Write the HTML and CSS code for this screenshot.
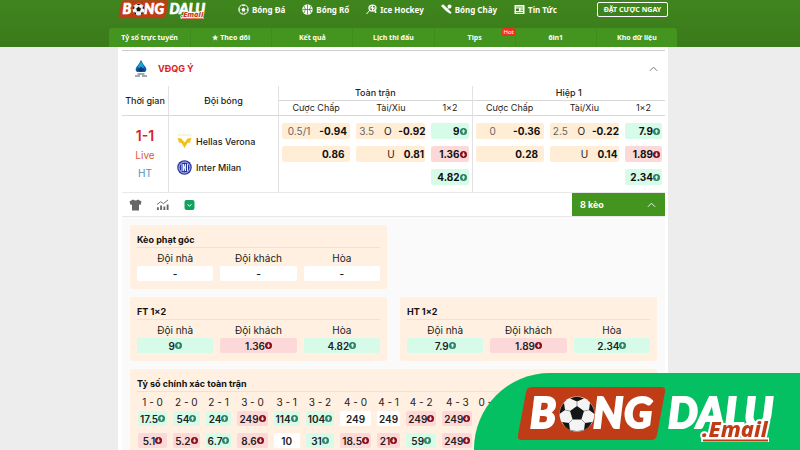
FILE: index.html
```html
<!DOCTYPE html>
<html lang="vi">
<head>
  <meta charset="UTF-8" />
  <meta name="viewport" content="width=device-width, initial-scale=1.0"/>
  <title>Bong Dalu</title>
  <link rel="stylesheet" href="styles.css">
</head>
<body>
  <!-- shared icons -->
  <svg class="sprite" aria-hidden="true">
    <symbol id="logo" viewBox="0 0 262 56">
      <path d="M14 1H143Q148 1 147 6L139 49Q138 54 133 54H4Q-1 54 0 49L8 6Q9 1 14 1Z" fill="#c03c16"/>
      <g class="logo-text">
        <text x="12" y="42">B</text>
        <text x="75" y="42">N</text>
        <text x="106" y="42">G</text>
        <text x="150" y="42">DALU</text>
      </g>
      <circle cx="59" cy="28" r="17.5" fill="#f4f4f4"/>
      <g fill="#151515">
        <path d="M59 20l7 5-2.600 8.400h-8.800L52 25z"/>
        <path d="M52 12.500q7-3.500 14 0L59 15.500z"/>
        <path d="M72 17q4 4 4.500 11L71 24z"/>
        <path d="M46 17q-4 4-4.500 11L47 24z"/>
        <path d="M74 36q-3 6-8 8l1-7z"/>
        <path d="M44 36q3 6 8 8l-1-7z"/>
      </g>
      <g fill="none" stroke="#999" stroke-width="1">
        <path d="M59 20v-5M66 25l5-1M63.400 33.400L67 37M54.600 33.400L51 37M52 25l-5-1M52 44q7 3 14 0"/>
      </g>
      <path d="M183 54H251" stroke="#fff" stroke-width="5"/>
      <text class="logo-mail" x="184" y="51">.Email</text>
      <path d="M185 54.500H250" stroke="#c03c16" stroke-width="2"/>
    </symbol>
    <symbol id="up" viewBox="0 0 14 14">
      <circle cx="7" cy="7" r="7" fill="#2b8063"/>
      <path d="M7 2.500l4 4.500H8.500v4h-3V7H3z" fill="#d5fbe8"/>
    </symbol>
    <symbol id="down" viewBox="0 0 14 14">
      <circle cx="7" cy="7" r="7" fill="#850b16"/>
      <path d="M7 11.500l4-4.500H8.500V3h-3v4H3z" fill="#ffd9d9"/>
    </symbol>
    <symbol id="chevron" viewBox="0 0 10 6">
      <path d="M1 5l4-4 4 4" fill="none" stroke="currentColor" stroke-width="1"/>
    </symbol>
  </svg>

  <header class="header">
    <div class="topbar">
      <a href="#" class="logo" aria-label="Bong Dalu Email"><svg><use href="#logo"/></svg></a>
      <nav class="sports">
        <a href="#">
          <svg viewBox="0 0 22 22"><circle cx="11" cy="11" r="9.500" fill="none" stroke="#fff" stroke-width="2"/><path d="M11 7l4 3-1.500 5h-5L7 10zM7 2l4 2.500L15 2zM2 8l3 3-2 4zM20 8l-3 3 2 4zM6 18l3-1v3zM16 18l-3-1v3z" fill="#fff"/></svg>
          Bóng Đá
        </a>
        <a href="#">
          <svg viewBox="0 0 22 22"><circle cx="11" cy="11" r="10.500" fill="#fff"/><path d="M11 1v20M1 11h20M4 4q6 7 0 14M18 4q-6 7 0 14" fill="none" stroke="#3b801b" stroke-width="1.500"/></svg>
          Bóng Rổ
        </a>
        <a href="#">
          <svg viewBox="0 0 22 22"><ellipse cx="13" cy="8" rx="7" ry="6" fill="none" stroke="#fff" stroke-width="2.500"/><path d="M8 12l-7 8M9 5l8 6M13 2v12M8 8h11" stroke="#fff" stroke-width="2"/><circle cx="19" cy="16" r="2" fill="#fff"/></svg>
          Ice Hockey
        </a>
        <a href="#">
          <svg viewBox="0 0 22 22"><path d="M1 2l4-1 7 7 9 9-2 3-9-6-9-9z" fill="#fff"/><circle cx="17" cy="5" r="4" fill="#fff"/><path d="M11 12l4-4" stroke="#fff" stroke-width="2"/></svg>
          Bóng Chày
        </a>
        <a href="#">
          <svg viewBox="0 0 22 22"><path d="M1 2h20v18H1z" fill="#fff"/><path d="M4 6h14M13 10h5M13 13h5M4 17h14" stroke="#3b801b" stroke-width="1.500"/><path d="M4 9h6v5H4z" fill="#3b801b"/></svg>
          Tin Tức
        </a>
      </nav>
      <button class="bet-btn">ĐẶT CƯỢC NGAY</button>
    </div>
    <nav class="subnav">
      <a href="#">Tỷ số trực tuyến</a>
      <a href="#">★ Theo dõi</a>
      <a href="#">Kết quả</a>
      <a href="#">Lịch thi đấu</a>
      <a href="#">Tips<span class="hot">Hot</span></a>
      <a href="#">6in1</a>
      <a href="#">Kho dữ liệu</a>
    </nav>
  </header>

  <main class="page">
    <div class="league">
      <svg class="league-logo" viewBox="0 0 28 34"><path d="M14 0Q17 7 23 14Q27 20 22 24H6Q1 20 5 14Q11 7 14 0Z" fill="#0b5fa5"/><path d="M14 3L20 14L14 23L8 14Z" fill="#19a5dc"/><path d="M6 20L14 13L22 20L14 24Z" fill="#093a78"/><path d="M7 28h14M2 32h10M16 32h10" stroke="#456" stroke-width="2"/></svg>
      <h2>VĐQG Ý</h2>
      <button class="collapse" aria-label="Thu gọn"><svg><use href="#chevron"/></svg></button>
    </div>

    <table class="match">
      <colgroup>
        <col class="c-time"><col class="c-team">
        <col class="c-odd"><col class="c-odd"><col class="c-win">
        <col class="c-odd"><col class="c-odd"><col class="c-win">
      </colgroup>
      <thead>
        <tr>
          <th rowspan="2">Thời gian</th>
          <th rowspan="2" class="line">Đội bóng</th>
          <th colspan="3" class="line group">Toàn trận</th>
          <th colspan="3" class="line group">Hiệp 1</th>
        </tr>
        <tr class="types">
          <th class="line">Cược Chấp</th><th>Tài/Xiu</th><th>1×2</th>
          <th class="line">Cược Chấp</th><th>Tài/Xiu</th><th>1×2</th>
        </tr>
      </thead>
      <tbody>
        <tr>
          <td rowspan="3" class="time">
            <strong>1-1</strong>
            <span class="live">Live</span>
            <span class="half">HT</span>
          </td>
          <td rowspan="3" class="teams line">
            <div class="team">
              <svg viewBox="0 0 30 30"><path d="M1 2h28" stroke="#e8e4a0" stroke-width="1.500"/><path d="M1 8l8 1 6 8 6-8 8-1-3 9-5 1-6 10-6-10-5-1z" fill="#f2c21c"/><path d="M11 9l4 6 4-6" fill="none" stroke="#fff" stroke-width="1"/></svg>
              Hellas Verona
            </div>
            <div class="team">
              <svg viewBox="0 0 30 30"><circle cx="15" cy="15" r="14.500" fill="#2336a0"/><circle cx="15" cy="15" r="11" fill="none" stroke="#fff" stroke-width="1.500"/><path d="M10 8v14M13 22V8l4 14V8M21 8v14" fill="none" stroke="#fff" stroke-width="1.800"/></svg>
              Inter Milan
            </div>
          </td>
          <td class="line"><div class="odd"><span>0.5/1</span><b>-0.94</b></div></td>
          <td><div class="odd"><span>3.5</span><i>O</i><b>-0.92</b></div></td>
          <td><div class="odd win up"><b>9</b><svg><use href="#up"/></svg></div></td>
          <td class="line"><div class="odd"><span>0</span><b>-0.36</b></div></td>
          <td><div class="odd"><span>2.5</span><i>O</i><b>-0.22</b></div></td>
          <td><div class="odd win up"><b>7.9</b><svg><use href="#up"/></svg></div></td>
        </tr>
        <tr>
          <td class="line"><div class="odd"><span></span><b>0.86</b></div></td>
          <td><div class="odd"><span></span><i>U</i><b>0.81</b></div></td>
          <td><div class="odd win down"><b>1.36</b><svg><use href="#down"/></svg></div></td>
          <td class="line"><div class="odd"><span></span><b>0.28</b></div></td>
          <td><div class="odd"><span></span><i>U</i><b>0.14</b></div></td>
          <td><div class="odd win down"><b>1.89</b><svg><use href="#down"/></svg></div></td>
        </tr>
        <tr class="last">
          <td class="line"></td>
          <td></td>
          <td><div class="odd win up"><b>4.82</b><svg><use href="#up"/></svg></div></td>
          <td class="line"></td>
          <td></td>
          <td><div class="odd win up"><b>2.34</b><svg><use href="#up"/></svg></div></td>
        </tr>
      </tbody>
    </table>

    <div class="tools">
      <button aria-label="Đội hình"><svg viewBox="0 0 24 24"><path d="M7 1q5 4 10 0l7 4-2 7-3-1v12H5V11l-3 1-2-7z" fill="#666"/></svg></button>
      <button aria-label="Thống kê"><svg viewBox="0 0 28 24"><path d="M4 23v-6M11 23V13M18 23v-8M25 23V11" stroke="#666" stroke-width="4"/><path d="M2 11l8-6 6 4 10-8" fill="none" stroke="#666" stroke-width="2"/></svg></button>
      <button aria-label="Sân đấu"><svg viewBox="0 0 24 24"><rect x="2" y="2" width="20" height="20" rx="4" fill="#12a15e"/><path d="M8 11l4 3 4-3" fill="none" stroke="#fff" stroke-width="2"/></svg></button>
      <button class="more">8 kèo <svg><use href="#chevron"/></svg></button>
    </div>

    <div class="markets">
      <section class="card">
        <h3>Kèo phạt góc</h3>
        <div class="choices">
          <div>Đội nhà<div class="price">-</div></div>
          <div>Đội khách<div class="price">-</div></div>
          <div>Hòa<div class="price">-</div></div>
        </div>
      </section>
      <section class="card start">
        <h3>FT 1×2</h3>
        <div class="choices">
          <div>Đội nhà<div class="price up">9<svg><use href="#up"/></svg></div></div>
          <div>Đội khách<div class="price down">1.36<svg><use href="#down"/></svg></div></div>
          <div>Hòa<div class="price up">4.82<svg><use href="#up"/></svg></div></div>
        </div>
      </section>
      <section class="card">
        <h3>HT 1×2</h3>
        <div class="choices">
          <div>Đội nhà<div class="price up">7.9<svg><use href="#up"/></svg></div></div>
          <div>Đội khách<div class="price down">1.89<svg><use href="#down"/></svg></div></div>
          <div>Hòa<div class="price up">2.34<svg><use href="#up"/></svg></div></div>
        </div>
      </section>
      <section class="card wide">
        <h3>Tỷ số chính xác toàn trận</h3>
        <table class="scores">
          <thead>
            <tr><th>1 - 0</th><th>2 - 0</th><th>2 - 1</th><th>3 - 0</th><th>3 - 1</th><th>3 - 2</th><th>4 - 0</th><th>4 - 1</th><th>4 - 2</th><th>4 - 3</th><th>0 - 0</th></tr>
          </thead>
          <tbody>
            <tr>
              <td><div class="price up">17.5<svg><use href="#up"/></svg></div></td>
              <td><div class="price up">54<svg><use href="#up"/></svg></div></td>
              <td><div class="price up">24<svg><use href="#up"/></svg></div></td>
              <td><div class="price down">249<svg><use href="#down"/></svg></div></td>
              <td><div class="price up">114<svg><use href="#up"/></svg></div></td>
              <td><div class="price up">104<svg><use href="#up"/></svg></div></td>
              <td><div class="price">249</div></td>
              <td><div class="price">249</div></td>
              <td><div class="price down">249<svg><use href="#down"/></svg></div></td>
              <td><div class="price down">249<svg><use href="#down"/></svg></div></td>
              <td></td>
            </tr>
            <tr>
              <td><div class="price down">5.1<svg><use href="#down"/></svg></div></td>
              <td><div class="price down">5.2<svg><use href="#down"/></svg></div></td>
              <td><div class="price up">6.7<svg><use href="#up"/></svg></div></td>
              <td><div class="price down">8.6<svg><use href="#down"/></svg></div></td>
              <td><div class="price">10</div></td>
              <td><div class="price up">31<svg><use href="#up"/></svg></div></td>
              <td><div class="price down">18.5<svg><use href="#down"/></svg></div></td>
              <td><div class="price down">21<svg><use href="#down"/></svg></div></td>
              <td><div class="price up">59<svg><use href="#up"/></svg></div></td>
              <td><div class="price down">249<svg><use href="#down"/></svg></div></td>
              <td></td>
            </tr>
          </tbody>
        </table>
      </section>
    </div>
  </main>

  <a href="#" class="banner" aria-label="Bong Dalu Email"><svg><use href="#logo"/></svg></a>
</body>
</html>
```
FILE: styles.css
```css
* {
  box-sizing: border-box;
}

body {
  margin: 0;
  padding-right: 14px;
  min-height: 100vh;
  background: #ededed;
  font-family: Inter, "Liberation Sans", sans-serif;
  font-size: 10px;
  color: #222;
}

a {
  color: inherit;
  text-decoration: none;
}

button {
  padding: 0;
  border: none;
  background: none;
  color: inherit;
  font: inherit;
  cursor: pointer;
}

h2, h3 {
  margin: 0;
}

svg {
  display: block;
  flex: none;
}

.sprite {
  position: absolute;
  width: 0;
  height: 0;
}

.logo-text {
  font: italic 900 42px Lato, sans-serif;
  fill: #fff;
  stroke: #fff;
  stroke-width: 2px;
}

.logo-mail {
  font: italic 800 22px "Noto Sans", sans-serif;
  fill: #c03c16;
  stroke: #fff;
  stroke-width: 4px;
  stroke-linejoin: round;
  paint-order: stroke;
}

/* header */
.header {
  margin-right: -14px;
  padding-right: 14px;
  background: linear-gradient(#3f851d, #3a7a1b);
  color: #fff;
  font-family: "Noto Sans", sans-serif;
  font-weight: 700;
}

.topbar {
  display: flex;
  align-items: center;
  max-width: 550px;
  height: 19px;
  margin: 0 auto;
}

.logo svg {
  width: 90px;
  height: 19px;
}

.sports {
  display: flex;
  gap: 17px;
  margin-left: 30px;
  font-size: 8px;
}

.sports a {
  display: flex;
  align-items: center;
  gap: 3px;
  white-space: nowrap;
}

.sports svg {
  width: 11px;
  height: 11px;
}

.bet-btn {
  width: 71px;
  height: 15px;
  margin-left: auto;
  border: 1px solid #fff;
  border-radius: 2px;
  font-size: 7px;
  line-height: 12px;
  white-space: nowrap;
}

.subnav {
  display: grid;
  grid-template-columns: repeat(7, 1fr);
  max-width: 568px;
  margin: 9px auto 0;
  border-radius: 3px 3px 0 0;
  background: #43951f;
  font-size: 7px;
  line-height: 19px;
  text-align: center;
}

.subnav a {
  position: relative;
}

.subnav a + a {
  border-left: 1px solid #3d8c1c;
}

.hot {
  position: absolute;
  top: 0;
  right: 0;
  padding: 0 1px;
  border-radius: 2px;
  background: #f0301f;
  font-size: 6px;
  font-weight: 400;
  line-height: 8px;
}

/* match */
.page {
  max-width: 550px;
  margin: 0 auto;
  padding: 3px 3px 0 4px;
  background: #fff;
}

.league {
  display: flex;
  align-items: center;
  height: 36px;
  padding: 0 7px 0 12px;
  border-top: 1px solid #ccc;
}

.league-logo {
  width: 14px;
  height: 17px;
}

.league h2 {
  margin-left: 10px;
  color: #d8232a;
  font-size: 9px;
  font-weight: 700;
}

.collapse {
  margin-left: auto;
  color: #666;
}

.collapse svg, .more svg {
  width: 9px;
  height: 6px;
}

.match {
  width: 100%;
  border-collapse: separate;
  border-spacing: 0;
  table-layout: fixed;
  border-bottom: 1px solid #e8e8e8;
}

.c-time { width: 46px; }
.c-team { width: 110px; }
.c-win { width: 43px; }

.match th {
  height: 15px;
  padding: 0;
  border-bottom: 1px solid #d8d8d8;
  font-size: 9px;
  font-weight: 500;
  line-height: 14px;
  white-space: nowrap;
}

.match .types th {
  font-weight: 400;
}

.match .line {
  border-left: 1px solid #e2e2e2;
}

.match td {
  padding: 7px 3px 0;
}

.match .last td {
  padding-bottom: 7px;
}

.match .time {
  padding: 0;
  text-align: center;
}

.time strong {
  display: block;
  color: #d8232a;
  font-size: 14px;
  font-weight: 600;
  line-height: 20px;
}

.time span {
  display: block;
  font-size: 10px;
  line-height: 18px;
}

.time .live {
  color: #dd5a34;
}

.time .half {
  color: #4a92c6;
}

.match .teams {
  padding: 0 8px;
}

.team {
  display: flex;
  align-items: center;
  gap: 4px;
  height: 26px;
  font-size: 9px;
  font-weight: 500;
}

.team svg {
  width: 15px;
  height: 15px;
}

.odd {
  display: grid;
  grid-auto-flow: column;
  grid-auto-columns: 1fr;
  align-items: center;
  height: 16px;
  border-radius: 2px;
  background: #ffedd6;
  text-align: center;
  white-space: nowrap;
}

.odd span {
  color: #666;
}

.odd i {
  font-style: normal;
}

.odd b {
  color: #111;
  font-weight: 700;
}

.odd.win {
  display: flex;
  justify-content: flex-end;
  padding-right: 2px;
}

.odd svg, .price svg {
  width: 7px;
  height: 7px;
}

.odd.up, .price.up {
  background: #d6fbe9;
}

.odd.down, .price.down {
  background: #fdd8d8;
}

/* toolbar */
.tools {
  display: flex;
  align-items: center;
  gap: 14px;
  height: 24px;
  padding-left: 7px;
  border-bottom: 1px solid #e8e8e8;
}

.tools svg {
  width: 13px;
  height: 12px;
}

.tools .more {
  display: flex;
  align-items: center;
  justify-content: space-between;
  width: 93px;
  height: 23px;
  margin-left: auto;
  padding: 0 9px 0 8px;
  background: #43951f;
  color: #fff;
  font-size: 9px;
  font-weight: 700;
}

.tools .more svg {
  width: 9px;
  height: 6px;
}

/* markets */
.markets {
  display: grid;
  grid-template-columns: 1fr 1fr;
  gap: 8px 13px;
  padding: 8px 8px 0;
  background: #fafafa;
}

.card {
  padding: 8px 7px;
  border-radius: 2px;
  background: #fff0e2;
}

.card.start {
  grid-column: 1;
}

.card.wide {
  grid-column: 1 / -1;
  padding-bottom: 0;
}

.card h3 {
  border-bottom: 1px solid #fadfc8;
  color: #111;
  font-size: 9px;
  font-weight: 700;
  line-height: 14px;
}

.choices {
  display: grid;
  grid-template-columns: repeat(3, 1fr);
  gap: 7px;
  padding-top: 2px;
  line-height: 16px;
  text-align: center;
}

.price {
  display: flex;
  align-items: center;
  justify-content: center;
  height: 15px;
  border-radius: 2px;
  background: #fff;
  font-weight: 600;
}

.scores {
  margin-left: -5px;
  border-spacing: 6px 0;
}

.scores th {
  padding: 3px 0 2px;
  font-weight: 400;
  line-height: 14px;
  white-space: nowrap;
}

.scores td {
  padding: 0 0 7px;
}

.scores .price {
  padding: 0 2px;
}

/* promo banner */
.banner {
  position: fixed;
  right: 0;
  bottom: 0;
  width: 326px;
  height: 77px;
  padding: 13px 0 0 44px;
  border-top-left-radius: 76px;
  background: #05c062;
}

.banner svg {
  width: 262px;
  height: 56px;
}
```
